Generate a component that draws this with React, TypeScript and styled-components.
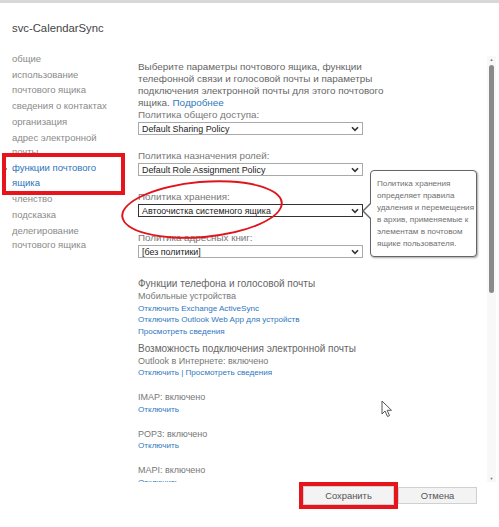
import * as React from 'react';
import styled, { createGlobalStyle } from 'styled-components';

const GlobalStyle = createGlobalStyle`
  html, body {
    margin: 0;
    padding: 0;
    background: #fff;
  }
  body {
    font-family: "Liberation Sans", Arial, "DejaVu Sans", sans-serif;
  }
`;

const navItems: { lines: string[], active?: boolean }[] = [
  { lines: ['общие'] },
  { lines: ['использование', 'почтового ящика'] },
  { lines: ['сведения о контактах'] },
  { lines: ['организация'] },
  { lines: ['адрес электронной', 'почты'] },
  { lines: ['функции почтового', 'ящика'], active: true },
  { lines: ['членство'] },
  { lines: ['подсказка'] },
  { lines: ['делегирование', 'почтового ящика'] },
];

const Chevron = () => (
  <svg width="8" height="6" viewBox="0 0 8 6">
    <path d="M1 1.2 L4 4.4 L7 1.2" fill="none" stroke="#333" strokeWidth="1.6" />
  </svg>
);

type FieldProps = {
  label: string,
  value: string,
  focused?: boolean,
  children?: React.ReactNode,
}

const Field: React.FC<FieldProps> = ({ label, value, focused, children }) => (
  <FieldBox>
    <Label>{label}</Label>
    <Select $focused={focused}>
      <span>{value}</span>
      <Chevron />
    </Select>
    {children}
  </FieldBox>
);

export default function App() {
  return (
    <Page>
      <GlobalStyle />
      <TopBar />
      <Title>svc-CalendarSync</Title>
      <Body>
        <Nav>
          {navItems.map((item) => (
            <NavItem key={item.lines[0]} $active={item.active}>
              {item.lines.map((l) => <div key={l}>{l}</div>)}
            </NavItem>
          ))}
        </Nav>
        <Content>
          <Intro>
            Выберите параметры почтового ящика, функции<br />
            телефонной связи и голосовой почты и параметры<br />
            подключения электронной почты для этого почтового<br />
            ящика. <Link>Подробнее</Link>
          </Intro>
          <Field label="Политика общего доступа:" value="Default Sharing Policy" />
          <Field label="Политика назначения ролей:" value="Default Role Assignment Policy" />
          <Field label="Политика хранения:" value="Автоочистка системного ящика" focused>
            <Callout>
              Политика хранения<br />
              определяет правила<br />
              удаления и перемещения<br />
              в архив, применяемые к<br />
              элементам в почтовом<br />
              ящике пользователя.
            </Callout>
            <Ellipse />
          </Field>
          <Field label="Политика адресных книг:" value="[без политики]" />

          <SectionTitle $first>Функции телефона и голосовой почты</SectionTitle>
          <Line>Мобильные устройства</Line>
          <Line $link><Link>Отключить Exchange ActiveSync</Link></Line>
          <Line $link><Link>Отключить Outlook Web App для устройств</Link></Line>
          <Line $link><Link>Просмотреть сведения</Link></Line>

          <SectionTitle>Возможность подключения электронной почты</SectionTitle>
          <Line>Outlook в Интернете: включено</Line>
          <Line $link><Link>Отключить</Link> <Link>|</Link> <Link>Просмотреть сведения</Link></Line>

          <Protocol>
            <Line>IMAP: включено</Line>
            <Line $link><Link>Отключить</Link></Line>
          </Protocol>
          <Protocol>
            <Line>POP3: включено</Line>
            <Line $link><Link>Отключить</Link></Line>
          </Protocol>
          <Protocol>
            <Line>MAPI: включено</Line>
            <Line $link><Link>Отключить</Link></Line>
          </Protocol>
        </Content>
        <ScrollBar>
          <ScrollArrow>▲</ScrollArrow>
          <ScrollTrack>
            <ScrollThumb />
          </ScrollTrack>
          <ScrollArrow>▼</ScrollArrow>
        </ScrollBar>
      </Body>
      <Footer>
        <Button $primary>Сохранить</Button>
        <Button>Отмена</Button>
      </Footer>
      <Cursor width="13" height="18" viewBox="0 0 13 18">
        <path d="M1 1 L1 14 L4 11 L6.5 16.5 L8.5 15.6 L6.2 10.3 L10.5 10.3 Z" fill="#fff" stroke="#555" strokeWidth="1" strokeLinejoin="round" />
      </Cursor>
    </Page>
  );
}

const Page = styled.div`
  position: relative;
  width: 499px;
  height: 527px;
  overflow: hidden;
  display: flex;
  flex-direction: column;
  background: #fff;
`;

const TopBar = styled.div`
  height: 3px;
  background: #d8d8d8;
  flex-shrink: 0;
`;

const Title = styled.div`
  margin: 15px 0 0 12px;
  font-size: 11.3px;
  line-height: 20px;
  color: #444;
`;

const Body = styled.div`
  display: flex;
  margin-top: 14px;
  height: 430px;
  overflow: hidden;
  flex-shrink: 0;
`;

const Nav = styled.div`
  width: 126px;
  padding-left: 12px;
  flex-shrink: 0;
  display: flex;
  flex-direction: column;
  gap: 1.5px;
`;

const NavItem = styled.div<{ $active?: boolean }>`
  position: relative;
  font-size: 9.5px;
  line-height: 14.5px;
  color: ${(p) => (p.$active ? '#2a74b9' : '#8a8a8a')};
  white-space: nowrap;
  z-index: ${(p) => (p.$active ? 1 : 0)};
  ${(p) => p.$active && `
    &::before {
      content: '';
      position: absolute;
      left: -8px;
      top: 5px;
      border-left: 3px solid #222;
      border-top: 3px solid transparent;
      border-bottom: 3px solid transparent;
    }
    &::after {
      content: '';
      position: absolute;
      left: -10px;
      top: -8px;
      width: 123px;
      height: 42px;
      box-sizing: border-box;
      border: 4px solid #e8141b;
    }
  `}
`;

const Content = styled.div`
  flex: 1;
  min-width: 0;
  padding-top: 9px;
  color: #666;
`;

const Intro = styled.div`
  font-size: 9.9px;
  line-height: 12px;
  color: #666;
  white-space: nowrap;
`;

const Link = styled.span`
  color: #2f78bd;
`;

const FieldBox = styled.div`
  position: relative;
  width: 225px;
  margin-bottom: 15px;
`;

const Label = styled.div`
  font-size: 9.8px;
  line-height: 12px;
  color: #777;
  margin-bottom: 1px;
`;

const Select = styled.div<{ $focused?: boolean }>`
  height: 13px;
  box-sizing: border-box;
  border: 1px solid ${(p) => (p.$focused ? '#333' : '#a9a9a9')};
  display: flex;
  align-items: center;
  justify-content: space-between;
  padding: 0 3px 0 3px;
  font-size: 8.9px;
  color: #222;
  background: #fff;
  white-space: nowrap;

  svg {
    flex-shrink: 0;
  }
`;

const Callout = styled.div`
  position: absolute;
  left: 232px;
  top: -21px;
  width: 107px;
  height: 87px;
  box-sizing: border-box;
  padding: 7px 0 0 6px;
  border: 1.5px solid #666;
  border-radius: 4px;
  background: #fff;
  box-shadow: 1px 1px 2px rgba(0, 0, 0, 0.35);
  font-size: 8.1px;
  line-height: 12px;
  color: #707070;
  white-space: nowrap;
  z-index: 2;

  &::before {
    content: '';
    position: absolute;
    left: -9px;
    top: 32px;
    border-right: 8px solid #666;
    border-top: 8px solid transparent;
    border-bottom: 8px solid transparent;
  }
  &::after {
    content: '';
    position: absolute;
    left: -7px;
    top: 33px;
    border-right: 7px solid #fff;
    border-top: 7px solid transparent;
    border-bottom: 7px solid transparent;
  }
`;

const Ellipse = styled.div`
  position: absolute;
  left: -17px;
  top: -10px;
  width: 162px;
  height: 57px;
  box-sizing: border-box;
  border: 2px solid #e0141b;
  border-radius: 50%;
  transform: rotate(-5deg);
  pointer-events: none;
  z-index: 3;
`;

const SectionTitle = styled.div<{ $first?: boolean }>`
  margin-top: ${(p) => (p.$first ? '18px' : '3.5px')};
  font-size: 10px;
  line-height: 15px;
  color: #666;
  white-space: nowrap;
`;

const Line = styled.div<{ $link?: boolean }>`
  font-size: ${(p) => (p.$link ? '8.1px' : '9px')};
  line-height: 11.5px;
  height: 11.5px;
  color: #777;
  white-space: nowrap;
`;

const Protocol = styled.div`
  margin-top: 13.5px;
`;

const ScrollBar = styled.div`
  width: 9px;
  margin: 4px 3px 0 0;
  display: flex;
  flex-direction: column;
  align-items: center;
  background: #f8f8f8;
  flex-shrink: 0;
`;

const ScrollArrow = styled.div`
  font-size: 4px;
  line-height: 7px;
  height: 7px;
  color: #777;
`;

const ScrollTrack = styled.div`
  position: relative;
  flex: 1;
  width: 100%;
`;

const ScrollThumb = styled.div`
  position: absolute;
  left: 2px;
  top: 2px;
  width: 5px;
  height: 228px;
  border-radius: 3px;
  background: #8a8a8a;
`;

const Footer = styled.div`
  display: flex;
  justify-content: flex-end;
  align-items: center;
  padding: 4px 22px 0 0;
`;

const Button = styled.button<{ $primary?: boolean }>`
  height: ${(p) => (p.$primary ? '19px' : '17px')};
  width: ${(p) => (p.$primary ? '91px' : '79px')};
  margin-left: ${(p) => (p.$primary ? '0' : '4px')};
  border: 1px solid #d0d0d0;
  background: #f3f3f3;
  font-family: inherit;
  font-size: 9.4px;
  color: #555;
  padding: 0;
  outline: ${(p) => (p.$primary ? '4px solid #e8141b' : 'none')};
`;

const Cursor = styled.svg`
  position: absolute;
  left: 381px;
  top: 400px;
`;
